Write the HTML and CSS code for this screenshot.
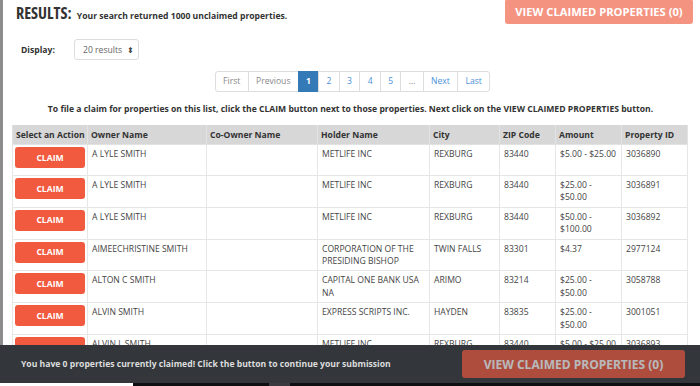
FILE: index.html
```html
<!DOCTYPE html>
<html>
<head>
<meta charset="utf-8">
<link rel="stylesheet" href="styles.css">
</head>
<body>
<div class="page">
  <div class="topbar">
    <h2 class="results"><span class="results-label">RESULTS:</span> <span class="results-sub">Your search returned 1000 unclaimed properties.</span></h2>
    <button class="btn-view faded">VIEW CLAIMED PROPERTIES (0)</button>
  </div>
  <div class="display-row">
    <span class="display-label">Display:</span>
    <div class="select">20 results <span class="caret">&#x2B0D;</span></div>
  </div>
  <div class="pager-wrap">
    <ul class="pager">
      <li class="dis">First</li>
      <li class="dis">Previous</li>
      <li class="active">1</li>
      <li>2</li>
      <li>3</li>
      <li>4</li>
      <li>5</li>
      <li class="dis">...</li>
      <li>Next</li>
      <li>Last</li>
    </ul>
  </div>
  <p class="instr">To file a claim for properties on this list, click the CLAIM button next to those properties. Next click on the VIEW CLAIMED PROPERTIES button.</p>
  <table class="tbl">
    <colgroup>
      <col class="c1"><col class="c2"><col class="c3"><col class="c4"><col class="c5"><col class="c6"><col class="c7"><col class="c8">
    </colgroup>
    <thead>
      <tr><th>Select an Action</th><th>Owner Name</th><th>Co-Owner Name</th><th>Holder Name</th><th>City</th><th>ZIP Code</th><th>Amount</th><th>Property ID</th></tr>
    </thead>
    <tbody>
      <tr><td><button class="claim">CLAIM</button></td><td>A LYLE SMITH</td><td></td><td>METLIFE INC</td><td>REXBURG</td><td>83440</td><td>$5.00 - $25.00</td><td>3036890</td></tr>
      <tr><td><button class="claim">CLAIM</button></td><td>A LYLE SMITH</td><td></td><td>METLIFE INC</td><td>REXBURG</td><td>83440</td><td>$25.00 - $50.00</td><td>3036891</td></tr>
      <tr><td><button class="claim">CLAIM</button></td><td>A LYLE SMITH</td><td></td><td>METLIFE INC</td><td>REXBURG</td><td>83440</td><td>$50.00 - $100.00</td><td>3036892</td></tr>
      <tr><td><button class="claim">CLAIM</button></td><td>AIMEECHRISTINE SMITH</td><td></td><td>CORPORATION OF THE PRESIDING BISHOP</td><td>TWIN FALLS</td><td>83301</td><td>$4.37</td><td>2977124</td></tr>
      <tr><td><button class="claim">CLAIM</button></td><td>ALTON C SMITH</td><td></td><td>CAPITAL ONE BANK USA NA</td><td>ARIMO</td><td>83214</td><td>$25.00 - $50.00</td><td>3058788</td></tr>
      <tr><td><button class="claim">CLAIM</button></td><td>ALVIN SMITH</td><td></td><td>EXPRESS SCRIPTS INC.</td><td>HAYDEN</td><td>83835</td><td>$25.00 - $50.00</td><td>3001051</td></tr>
      <tr><td><button class="claim">CLAIM</button></td><td>ALVIN L SMITH</td><td></td><td>METLIFE INC</td><td>REXBURG</td><td>83440</td><td>$5.00 - $25.00</td><td>3036893</td></tr>
    </tbody>
  </table>
</div>
<div class="footer">
  <div class="footer-bar">
    <span class="footer-text">You have 0 properties currently claimed! Click the button to continue your submission</span>
    <button class="btn-view dim">VIEW CLAIMED PROPERTIES (0)</button>
  </div>
  <div class="taskstrip"><span class="ts-white"></span><span class="ts-black"><span class="ts-gray"></span></span></div>
</div>
</body>
</html>
```

FILE: styles.css
```css
html, body {
  margin: 0;
  padding: 0;
  background: #fff;
  overflow: hidden;
}
body {
  font-family: "Open Sans", "DejaVu Sans", sans-serif;
  color: #333;
  font-size: 8.5px;
  width: 700px;
  height: 386px;
}
.page {
  border-left: 3px solid #8c8c8c;
  height: 386px;
  box-sizing: border-box;
}
.topbar {
  display: flex;
  justify-content: space-between;
  align-items: flex-start;
}
.results {
  margin: 3px 0 0 13px;
  font-weight: 700;
  line-height: 20px;
}
.results-label {
  font-size: 16px;
  font-stretch: 80%;
  color: #333;
  margin-right: 2px;
}
.results-sub {
  font-size: 8.6px;
}
.btn-view {
  font-family: "Open Sans", "DejaVu Sans", sans-serif;
  font-weight: 700;
  font-size: 11.2px;
  color: #fff;
  background: #f15a3f;
  border: none;
  border-radius: 3px;
  padding: 0;
  width: 188px;
  height: 25px;
  opacity: 0.65;
}
.btn-view.faded {
  margin: 0 7px 0 0;
  position: relative;
  top: -1px;
}
.display-row {
  display: flex;
  align-items: center;
  margin: 13px 0 0 18px;
}
.display-label {
  font-weight: 700;
  width: 53px;
  font-size: 8.6px;
}
.select {
  width: 65px;
  height: 21px;
  box-sizing: border-box;
  border: 1px solid #ddd;
  border-radius: 3px;
  color: #666;
  font-size: 8.6px;
  line-height: 19px;
  padding-left: 8px;
}
.caret {
  font-size: 8px;
  margin-left: 3px;
  color: #444;
}
.pager-wrap {
  display: flex;
  justify-content: center;
  margin-top: 11px;
  padding-left: 2px;
}
.pager {
  display: flex;
  list-style: none;
  margin: 0;
  padding: 0;
}
.pager li {
  border: 1px solid #ddd;
  margin-left: -1px;
  height: 21px;
  box-sizing: border-box;
  line-height: 19px;
  padding: 0 7.3px;
  color: #4a90d9;
  font-size: 8.6px;
}
.pager li:first-child {
  border-radius: 3px 0 0 3px;
  margin-left: 0;
}
.pager li:last-child {
  border-radius: 0 3px 3px 0;
}
.pager li.dis {
  color: #888;
}
.pager li.active {
  background: #337ab7;
  border-color: #337ab7;
  color: #fff;
  font-weight: 700;
}
.instr {
  text-align: center;
  font-weight: 700;
  font-size: 8.6px;
  margin: 11px 0 0 0;
  line-height: 12px;
  padding-right: 2px;
}
.tbl {
  border-collapse: collapse;
  margin: 10px 0 0 9px;
  width: 675px;
  table-layout: fixed;
}
.c1 { width: 75px; }
.c2 { width: 119px; }
.c3 { width: 111px; }
.c4 { width: 112px; }
.c5 { width: 70px; }
.c6 { width: 56px; }
.c7 { width: 66px; }
.c8 { width: 66px; }
.tbl th {
  background: #d7d7d7;
  text-align: left;
  font-weight: 700;
  font-size: 8.6px;
  height: 19px;
  padding: 0 3px;
  border: 1px solid #e2e2e2;
  border-top: none;
  line-height: 12px;
  white-space: nowrap;
  overflow: hidden;
}
.tbl td {
  border: 1px solid #e6e6e6;
  vertical-align: top;
  padding: 3px 4px;
  height: 24px;
  line-height: 12.4px;
  color: #444;
  font-size: 8.6px;
}
.tbl td:first-child {
  padding: 2px 2px;
}
.claim {
  width: 70px;
  height: 21px;
  background: #f15a3f;
  color: #fff;
  border: none;
  border-radius: 3px;
  font-family: "Open Sans", "DejaVu Sans", sans-serif;
  font-weight: 700;
  font-size: 8.6px;
  padding: 0;
  display: block;
}
.footer {
  position: fixed;
  left: 0;
  bottom: 0;
  width: 700px;
}
.footer-bar {
  background: #33373c;
  height: 38px;
  display: flex;
  align-items: center;
  justify-content: space-between;
  padding: 0 15px 0 21px;
}
.footer-text {
  color: #ddd;
  font-weight: 700;
  font-size: 8.6px;
}
.btn-view.dim {
  width: 223px;
  height: 28px;
  font-size: 12px;
  color: #fff;
}
.taskstrip {
  display: flex;
  height: 3px;
}
.ts-white {
  width: 133px;
  background: #fff;
}
.ts-black {
  flex: 1;
  background: #0f0f12;
  padding-left: 136px;
}
.ts-gray {
  display: block;
  width: 21px;
  height: 3px;
  background: #3a3a3e;
}
```
